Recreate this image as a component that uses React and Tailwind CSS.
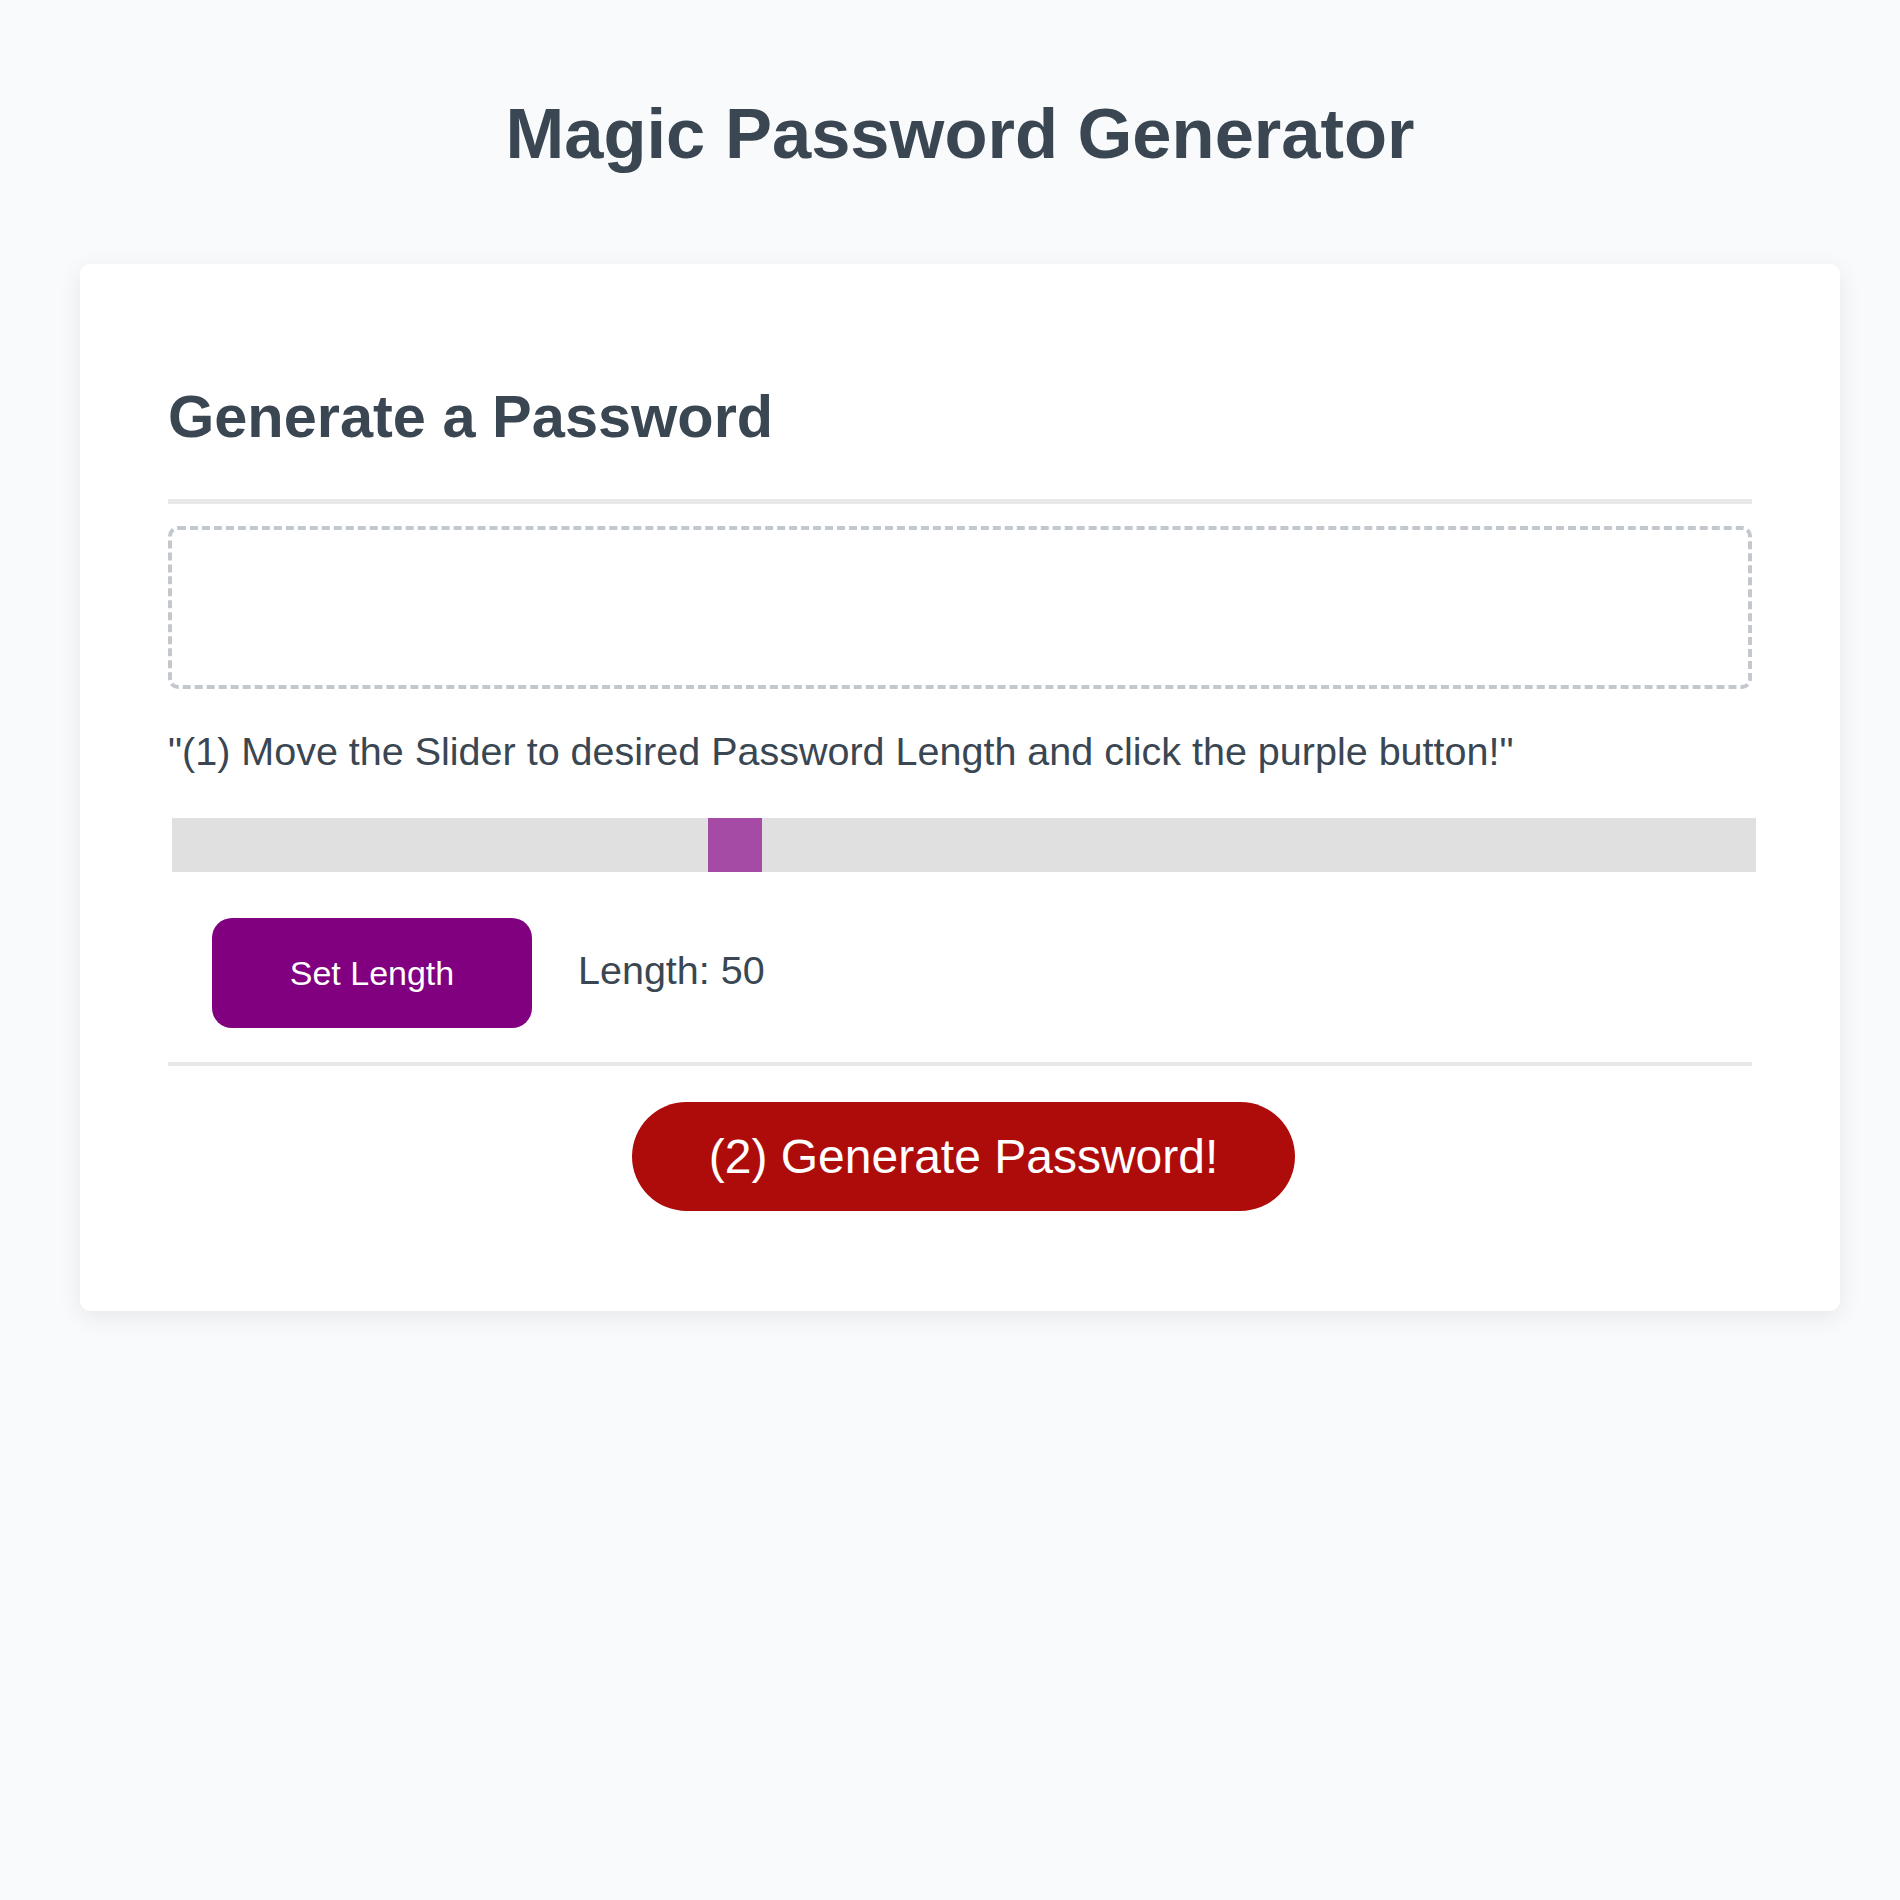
import React, { useState } from "react";

const MIN_LENGTH = 8;
const MAX_LENGTH = 128;

const App = () => {
  const [sliderValue, setSliderValue] = useState(50);
  const [length, setLength] = useState(50);
  const [password, setPassword] = useState("");

  const generatePassword = () => {
    const chars =
      "ABCDEFGHIJKLMNOPQRSTUVWXYZabcdefghijklmnopqrstuvwxyz0123456789!@#$%^&*";
    let result = "";
    for (let i = 0; i < length; i++) {
      result += chars[Math.floor(Math.random() * chars.length)];
    }
    setPassword(result);
  };

  return (
    <div className="min-h-screen bg-[#f9fafb] text-[#3a4753] font-['Liberation_Sans',Arial,sans-serif] pt-[92px] pb-20 overflow-hidden">
      <div className="ml-[80px] w-[1760px]">
        <h1 className="text-center text-[70.5px] leading-[84px] font-bold">
          Magic Password Generator
        </h1>

        <div className="mt-[88px] bg-white rounded-[10px] shadow-[0_6px_24px_rgba(0,0,0,0.08)] px-[88px] pt-[117px] pb-[100px]">
          <h2 className="text-[59.5px] leading-[71px] font-bold">
            Generate a Password
          </h2>

          <div className="mt-[47px] h-[5px] bg-[#e8e8e8]" />

          {/* password output */}
          <div className="mt-[22px] h-[163px] border-4 border-dashed border-[#c3c8cf] rounded-[10px] px-6 flex items-center text-[32px] font-['Liberation_Mono',monospace] break-all overflow-hidden">
            {password}
          </div>

          <p className="mt-[38px] text-[39.5px] leading-[48px]">
            "(1) Move the Slider to desired Password Length and click the purple
            button!"
          </p>

          <input
            type="range"
            min={MIN_LENGTH}
            max={MAX_LENGTH}
            value={sliderValue}
            onChange={(e) => setSliderValue(Number(e.target.value))}
            className="block mt-[43px] ml-[4px] w-full h-[54px] appearance-none bg-[#d3d3d3] opacity-70 outline-none cursor-pointer [&::-webkit-slider-thumb]:appearance-none [&::-webkit-slider-thumb]:w-[54px] [&::-webkit-slider-thumb]:h-[54px] [&::-webkit-slider-thumb]:bg-[#800080] [&::-webkit-slider-thumb]:border-0 [&::-moz-range-thumb]:w-[54px] [&::-moz-range-thumb]:h-[54px] [&::-moz-range-thumb]:bg-[#800080] [&::-moz-range-thumb]:border-0 [&::-moz-range-thumb]:rounded-none"
          />

          <div className="mt-[46px] flex items-center">
            <button
              onClick={() => setLength(sliderValue)}
              className="ml-[44px] w-[320px] h-[110px] rounded-[20px] bg-[#800080] text-white text-[34px] leading-[40px]"
            >
              Set Length
            </button>
            <span className="ml-[46px] mb-[6px] text-[39.5px] leading-[48px]">
              Length: {length}
            </span>
          </div>

          <div className="mt-[34px] h-[4px] bg-[#e8e8e8]" />

          <div className="mt-[36px] flex justify-center">
            <button
              onClick={generatePassword}
              className="ml-[7px] h-[109px] px-[77px] rounded-full bg-[#ae0c0a] text-white text-[48px] leading-[58px] flex items-center justify-center"
            >
              (2) Generate Password!
            </button>
          </div>
        </div>
      </div>
    </div>
  );
};

export default App;
